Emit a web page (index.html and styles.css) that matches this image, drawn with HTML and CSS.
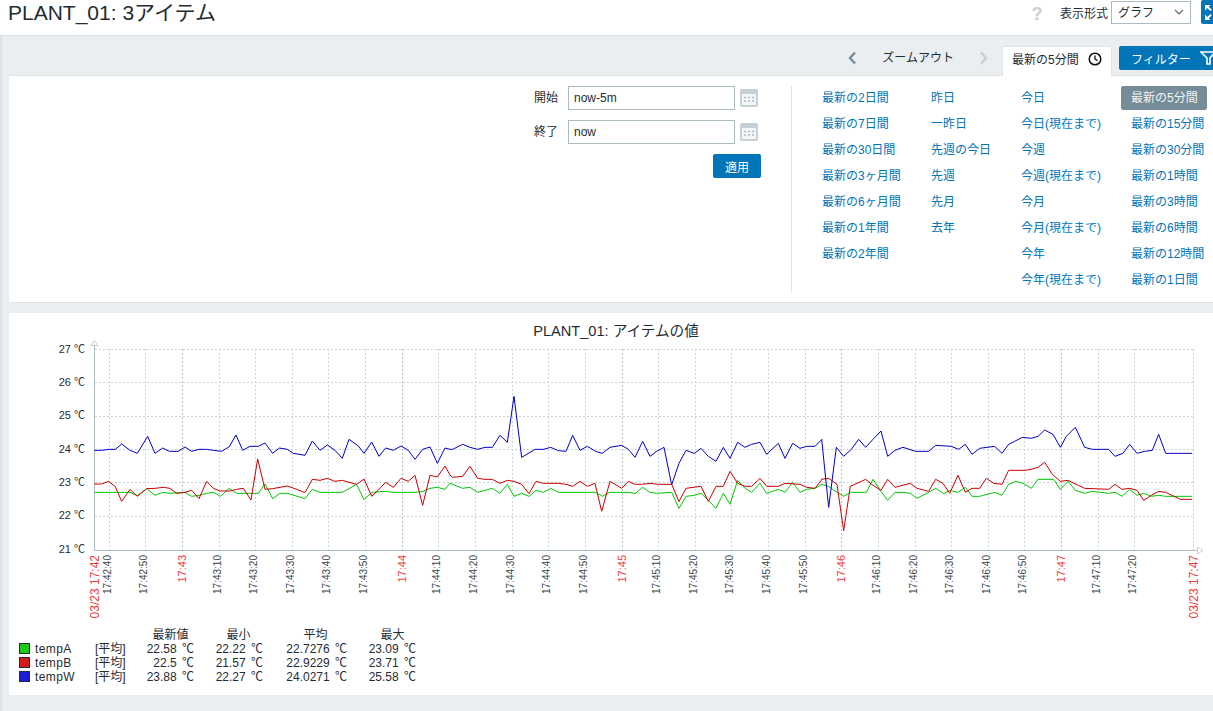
FILE: index.html
```html
<!DOCTYPE html>
<html lang="ja">
<head>
<meta charset="utf-8">
<title>PLANT_01</title>
<link rel="stylesheet" href="styles.css">
</head>
<body>
<header class="head">
  <h1 class="title">PLANT_01: 3アイテム</h1>
  <div class="head-tools">
    <span class="help">?</span>
    <label class="view-label">表示形式</label>
    <div class="select">グラフ
      <svg class="chev" width="10" height="6" viewBox="0 0 10 6"><path d="M1 1l4 4 4-4" fill="none" stroke="#5a6a73" stroke-width="1.2"/></svg>
    </div>
    <button class="expand" type="button">
      <svg class="expand-icon" width="22" height="24" viewBox="0 0 22 24"><path d="M4 5h5.500L7.800 6.700l3 3-1.400 1.400-3-3L4 10.500zM4 20h5.500l-1.700-1.700 3-3-1.400-1.400-3 3L4 14.500z" fill="#fff"/></svg>
    </button>
  </div>
</header>

<nav class="tabs">
  <svg class="arrow" width="10" height="14" viewBox="0 0 10 14"><path d="M8 1.5L3 7l5 5.5" fill="none" stroke="#768d99" stroke-width="2.4"/></svg>
  <span class="zoomout">ズームアウト</span>
  <svg class="arrow" width="10" height="14" viewBox="0 0 10 14"><path d="M2 1.5L7 7l-5 5.5" fill="none" stroke="#c5d0d6" stroke-width="2.4"/></svg>
  <div class="tab">最新の5分間
    <svg class="clock" width="14" height="14" viewBox="0 0 14 14"><circle cx="7" cy="7" r="5.800" fill="none" stroke="#111" stroke-width="1.500"/><path d="M7 3.400V7l2.400 1.600" fill="none" stroke="#111" stroke-width="1.300"/></svg>
  </div>
  <button class="filter-btn" type="button">フィルター
    <svg class="funnel" width="16" height="14" viewBox="0 0 16 14"><path d="M1 1h14L10 7v6H7V7z" fill="none" stroke="#fff" stroke-width="1.600"/></svg>
  </button>
</nav>

<section class="panel filter">
  <form class="range">
    <label class="range-label">開始</label>
    <div class="field">now-5m</div>
    <svg class="cal" width="18" height="18" viewBox="0 0 18 18"><rect width="18" height="18" rx="2" fill="#c6d1d7"/><rect x="2" y="5" width="14" height="11" fill="#f4f6f7"/><path d="M4 8.500h2M8 8.500h2M12 8.500h2M4 12h2M8 12h2M12 12h2" stroke="#aebcc4" stroke-width="1.500"/></svg>
    <label class="range-label">終了</label>
    <div class="field">now</div>
    <svg class="cal" width="18" height="18" viewBox="0 0 18 18"><rect width="18" height="18" rx="2" fill="#c6d1d7"/><rect x="2" y="5" width="14" height="11" fill="#f4f6f7"/><path d="M4 8.500h2M8 8.500h2M12 8.500h2M4 12h2M8 12h2M12 12h2" stroke="#aebcc4" stroke-width="1.500"/></svg>
    <button class="apply" type="button">適用</button>
  </form>
  <div class="quick">
    <a class="q">最新の2日間</a><a class="q">昨日</a><a class="q">今日</a><a class="q q-on">最新の5分間</a>
    <a class="q">最新の7日間</a><a class="q">一昨日</a><a class="q">今日(現在まで)</a><a class="q">最新の15分間</a>
    <a class="q">最新の30日間</a><a class="q">先週の今日</a><a class="q">今週</a><a class="q">最新の30分間</a>
    <a class="q">最新の3ヶ月間</a><a class="q">先週</a><a class="q">今週(現在まで)</a><a class="q">最新の1時間</a>
    <a class="q">最新の6ヶ月間</a><a class="q">先月</a><a class="q">今月</a><a class="q">最新の3時間</a>
    <a class="q">最新の1年間</a><a class="q">去年</a><a class="q">今月(現在まで)</a><a class="q">最新の6時間</a>
    <a class="q">最新の2年間</a><span></span><a class="q">今年</a><a class="q">最新の12時間</a>
    <span></span><span></span><a class="q">今年(現在まで)</a><a class="q">最新の1日間</a>
  </div>
</section>

<section class="panel graph">
<svg class="chart" width="1204" height="382" viewBox="9 313 1204 382">
  <text class="c-title" x="616" y="336" text-anchor="middle">PLANT_01: アイテムの値</text>

  <path class="grid" d="M95 349.500H1193M95 382.500H1193M95 416.500H1193M95 449.500H1193M95 482.500H1193M95 516.500H1193"/>
  <path class="grid" d="M109.500 349V550M145.500 349V550M219.500 349V550M255.500 349V550M292.500 349V550M328.500 349V550M365.500 349V550M438.500 349V550M475.500 349V550M512.500 349V550M548.500 349V550M585.500 349V550M658.500 349V550M695.500 349V550M731.500 349V550M768.500 349V550M805.500 349V550M878.500 349V550M915.500 349V550M951.500 349V550M988.500 349V550M1024.500 349V550M1098.500 349V550M1134.500 349V550M1193.500 349V550"/>
  <path class="grid-major" d="M182.500 349V550M402.500 349V550M622.500 349V550M841.500 349V550M1061.500 349V550"/>
  <path class="axis" d="M94.500 346V550.500H1197"/>
  <path class="axis-tip" d="M94.500 340.500L98 345.500H91zM1203 550.500L1197.500 547V554z"/>

  <g class="y-labels" text-anchor="end">
    <text x="85" y="353">27 ℃</text><text x="85" y="386">26 ℃</text><text x="85" y="419">25 ℃</text><text x="85" y="453">24 ℃</text><text x="85" y="486">23 ℃</text><text x="85" y="519">22 ℃</text><text x="85" y="553">21 ℃</text>
  </g>

  <g transform="translate(50 320) scale(.33333)">
    <polyline class="s-g" points="133,517 240,517 262,527 290,506 315,526 338,517 360,520 405,517 425,529 447,526 470,520 490,517 512,529 537,505 560,520 625,520 645,492 668,536 690,520 712,520 765,536 787,508 810,517 877,517 920,493 942,539 965,517 1007,514 1030,517 1095,517 1118,514 1140,505 1162,502 1185,508 1200,490"/>
    <polyline class="s-r" points="133,492 155,492 175,484 196,500 215,544 240,508 262,529 290,506 315,505 340,502 360,505 380,520 405,517 425,511 447,536 470,484 490,505 510,513 540,513 560,508 580,505 603,540 623,417 645,508 668,506 690,502 712,498 735,506 765,518 787,478 810,481 832,475 855,484 877,481 897,487 920,493 942,477 965,529 985,510 1007,487 1030,502 1053,475 1075,484 1095,466 1118,556 1140,466 1162,471 1185,438 1200,465"/>
    <polyline class="s-b" points="133,391 155,391 178,388 196,388 215,372 240,391 262,400 293,349 315,400 338,384 358,394 385,394 405,381 425,394 447,388 470,388 490,391 515,394 538,380 558,345 578,391 600,379 625,379 645,369 668,400 688,384 712,388 730,400 765,406 787,363 810,391 832,375 855,391 877,415 897,358 925,378 942,400 965,366 987,409 1007,384 1030,391 1053,378 1075,391 1095,418 1118,388 1140,381 1162,430 1185,384 1200,388"/>
  </g>
  <g transform="translate(450 380) scale(.33333)">
    <polyline class="s-g" points="0,310 38,325 60,322 83,337 127,325 150,340 172,313 192,349 215,340 237,349 258,331 280,337 302,325 325,337 437,337 457,349 480,337 540,337 555,341 578,322 600,337 620,340 665,337 687,385 708,349 733,346 753,340 775,361 798,385 820,340 840,373 863,301 885,325 905,337 930,310 950,340 985,328 1005,337 1028,307 1050,337 1070,328 1095,325 1116,313"/>
    <polyline class="s-r" points="0,285 8,292 38,289 60,259 83,295 105,298 127,298 150,310 172,301 192,304 215,313 237,341 258,304 280,310 325,310 348,313 368,319 390,304 412,319 435,310 455,394 480,304 515,325 535,304 555,313 575,313 600,310 625,313 665,313 687,365 708,325 753,319 775,364 798,319 820,319 840,274 863,310 885,319 905,319 930,295 950,319 985,319 1005,310 1050,313 1070,322 1095,325 1116,298"/>
    <polyline class="s-b" points="0,208 8,208 38,193 60,202 83,208 105,202 127,202 150,166 172,187 192,49 215,232 255,208 280,208 302,202 325,212 348,214 368,166 390,211 412,199 437,214 457,220 480,202 515,196 535,208 555,232 578,184 600,229 620,214 642,202 665,315 687,250 708,211 733,220 753,205 775,229 798,244 820,202 840,235 863,187 885,202 905,193 930,187 950,223 985,190 1005,235 1028,190 1050,205 1070,199 1095,199 1116,178"/>
  </g>
  <g transform="translate(813 380) scale(.33333)">
    <polyline class="s-g" points="25,313 47,319 72,337 92,349 112,337 160,337 180,298 204,334 224,361 246,337 270,337 292,340 312,355 347,337 368,325 392,341 410,331 435,337 457,322 477,349 500,349 545,337 567,346 587,313 608,304 630,310 655,325 675,298 722,298 742,328 765,304 787,331 815,340 838,334 887,340 906,337 927,349 950,328 972,346 992,340 1015,349 1037,346 1058,349 1137,349"/>
    <polyline class="s-r" points="25,298 47,295 72,313 92,452 112,319 158,298 180,316 204,331 224,298 246,322 292,310 312,325 347,334 368,298 390,310 410,340 435,286 457,337 477,325 500,325 520,295 542,310 567,313 587,271 635,271 655,268 675,262 695,247 718,283 742,304 765,301 815,325 887,328 906,313 927,328 950,325 972,331 992,361 1015,346 1037,334 1058,337 1102,358 1137,358"/>
    <polyline class="s-b" points="26,178 47,382 70,202 92,229 115,208 137,178 158,202 180,178 204,153 224,229 246,211 270,202 308,214 347,214 368,196 415,199 437,208 457,193 477,223 500,205 545,199 567,220 587,193 605,184 628,172 655,175 675,169 695,150 720,163 742,202 760,169 787,142 815,202 838,208 887,208 906,229 930,220 950,193 972,220 995,214 1018,211 1037,163 1058,220 1137,220"/>
  </g>

  <g class="t-labels" text-anchor="end">
    <text transform="translate(110.500 555) rotate(-90)">17:42:40</text>
    <text transform="translate(146.500 555) rotate(-90)">17:42:50</text>
    <text transform="translate(220.500 555) rotate(-90)">17:43:10</text>
    <text transform="translate(256.500 555) rotate(-90)">17:43:20</text>
    <text transform="translate(293.500 555) rotate(-90)">17:43:30</text>
    <text transform="translate(329.500 555) rotate(-90)">17:43:40</text>
    <text transform="translate(366.500 555) rotate(-90)">17:43:50</text>
    <text transform="translate(439.500 555) rotate(-90)">17:44:10</text>
    <text transform="translate(476.500 555) rotate(-90)">17:44:20</text>
    <text transform="translate(513.500 555) rotate(-90)">17:44:30</text>
    <text transform="translate(549.500 555) rotate(-90)">17:44:40</text>
    <text transform="translate(586.500 555) rotate(-90)">17:44:50</text>
    <text transform="translate(659.500 555) rotate(-90)">17:45:10</text>
    <text transform="translate(696.500 555) rotate(-90)">17:45:20</text>
    <text transform="translate(732.500 555) rotate(-90)">17:45:30</text>
    <text transform="translate(769.500 555) rotate(-90)">17:45:40</text>
    <text transform="translate(806.500 555) rotate(-90)">17:45:50</text>
    <text transform="translate(879.500 555) rotate(-90)">17:46:10</text>
    <text transform="translate(916.500 555) rotate(-90)">17:46:20</text>
    <text transform="translate(952.500 555) rotate(-90)">17:46:30</text>
    <text transform="translate(989.500 555) rotate(-90)">17:46:40</text>
    <text transform="translate(1025.500 555) rotate(-90)">17:46:50</text>
    <text transform="translate(1099.500 555) rotate(-90)">17:47:10</text>
    <text transform="translate(1135.500 555) rotate(-90)">17:47:20</text>
  </g>
  <g class="t-red" text-anchor="end">
    <text class="t-date" transform="translate(99 555) rotate(-90)">03/23 17:42</text>
    <text transform="translate(186 555) rotate(-90)">17:43</text>
    <text transform="translate(406 555) rotate(-90)">17:44</text>
    <text transform="translate(626 555) rotate(-90)">17:45</text>
    <text transform="translate(845 555) rotate(-90)">17:46</text>
    <text transform="translate(1065 555) rotate(-90)">17:47</text>
    <text class="t-date" transform="translate(1198 555) rotate(-90)">03/23 17:47</text>
  </g>

  <g class="legend">
    <text x="170.500" y="639" text-anchor="middle">最新値</text>
    <text x="238.500" y="639" text-anchor="middle">最小</text>
    <text x="315.500" y="639" text-anchor="middle">平均</text>
    <text x="392.500" y="639" text-anchor="middle">最大</text>

    <rect class="sw-a" x="19.500" y="643.500" width="10" height="10"/>
    <text class="name" x="35" y="653">tempA</text>
    <text x="95" y="653">[平均]</text>
    <text x="194" y="653" text-anchor="end">22.58 ℃</text><text x="263" y="653" text-anchor="end">22.22 ℃</text><text x="347" y="653" text-anchor="end">22.7276 ℃</text><text x="416" y="653" text-anchor="end">23.09 ℃</text>

    <rect class="sw-b" x="19.500" y="657.500" width="10" height="10"/>
    <text class="name" x="35" y="667">tempB</text>
    <text x="95" y="667">[平均]</text>
    <text x="194" y="667" text-anchor="end">22.5 ℃</text><text x="263" y="667" text-anchor="end">21.57 ℃</text><text x="347" y="667" text-anchor="end">22.9229 ℃</text><text x="416" y="667" text-anchor="end">23.71 ℃</text>

    <rect class="sw-w" x="19.500" y="671.500" width="10" height="10"/>
    <text class="name" x="35" y="681">tempW</text>
    <text x="95" y="681">[平均]</text>
    <text x="194" y="681" text-anchor="end">23.88 ℃</text><text x="263" y="681" text-anchor="end">22.27 ℃</text><text x="347" y="681" text-anchor="end">24.0271 ℃</text><text x="416" y="681" text-anchor="end">25.58 ℃</text>
  </g>
</svg>
</section>
</body>
</html>
```
FILE: styles.css
```css
* { box-sizing: border-box; }
html, body { height: 100%; }
body {
  margin: 0;
  overflow: hidden;
  background: linear-gradient(90deg, #d9dee1 0, #ebeef0 4px);
  color: #1f2c33;
  font: 12px "Liberation Sans", "Noto Sans CJK JP", sans-serif;
}
.head {
  height: 36px;
  display: flex;
  justify-content: space-between;
  background: #fff;
  border-bottom: 1px solid #dfe4e7;
  padding-left: 8px;
}
.title {
  margin: 0;
  font-size: 21px;
  font-weight: 400;
  line-height: 26px;
  white-space: nowrap;
}
.head-tools {
  display: flex;
  align-items: flex-start;
  margin-right: -10px;
}
.help {
  width: 16px;
  margin-right: 15px;
  margin-top: 2px;
  font-size: 18px;
  line-height: 24px;
  font-weight: 700;
  color: #c5d0d6;
  text-align: center;
}
.view-label { line-height: 28px; margin-right: 3px; }
.select {
  position: relative;
  width: 80px;
  height: 23px;
  margin-top: 1px;
  padding: 1px 0 0 6px;
  line-height: 21px;
  border: 1px solid #acbbc2;
  background: #fff;
}
.chev { position: absolute; right: 6px; top: 7px; }
.expand {
  width: 22px;
  height: 24px;
  margin-left: 10px;
  padding: 0;
  border: 0;
  border-radius: 2px;
  background: #0275b8;
  display: block;
  line-height: 0;
}
.expand-icon { display: block; }
.tabs {
  height: 39px;
  display: flex;
  justify-content: flex-end;
  align-items: flex-start;
  margin-right: -10px;
  padding-top: 10px;
}
.arrow { margin-top: 5px; flex: none; }
.zoomout { margin: 5px 25px 0 25px; line-height: 14px; white-space: nowrap; }
.tab {
  display: flex;
  align-items: center;
  justify-content: space-between;
  width: 110px;
  height: 30px;
  margin-left: 13px;
  padding: 0 9px 6px;
  background: #fff;
  border: 1px solid #dfe4e7;
  border-bottom: 0;
  position: relative;
  z-index: 1;
  white-space: nowrap;
}
.clock { flex: none; }
.filter-btn {
  display: flex;
  align-items: center;
  width: 104px;
  height: 24px;
  margin-left: 7px;
  padding: 0 0 0 12px;
  border: 0;
  border-radius: 2px;
  background: #0275b8;
  color: #fff;
  font: inherit;
  white-space: nowrap;
}
.funnel { margin-left: 9px; flex: none; }
.panel {
  margin-left: 9px;
  background: #fff;
}
.filter {
  height: 228px;
  border-top: 1px solid #dfe4e7;
  border-bottom: 1px solid #dfe4e7;
  padding-top: 10px;
  display: flex;
  justify-content: flex-end;
}
.range {
  display: grid;
  grid-template-columns: auto 167px 26px;
  grid-auto-rows: 24px;
  row-gap: 10px;
  align-content: start;
  margin-right: 30px;
}
.range-label { padding-right: 10px; line-height: 25px; text-align: right; }
.field {
  border: 1px solid #acbbc2;
  padding-left: 5px;
  line-height: 22px;
  font-size: 12px;
}
.cal { margin: 3px 0 0 5px; }
.apply {
  grid-column: 1 / -1;
  justify-self: end;
  width: 48px;
  height: 24px;
  padding: 0;
  border: 0;
  border-radius: 2px;
  background: #0275b8;
  color: #fff;
  font: inherit;
}
.quick {
  width: 422px;
  height: 206px;
  border-left: 1px solid #dfe4e7;
  padding-left: 30px;
  display: grid;
  grid-template-columns: 109px 90px 110px 1fr;
  grid-auto-rows: 26px;
  white-space: nowrap;
}
.q { color: #0275b8; line-height: 24px; }
.q-on {
  justify-self: start;
  width: 86px;
  height: 24px;
  margin-left: -10px;
  padding-left: 10px;
  border-radius: 2px;
  background: #768d99;
  color: #f2f4f5;
}
.graph {
  height: 382px;
  margin-top: 10px;
}
.chart {
  display: block;
  font-family: "Liberation Sans", "Noto Sans CJK JP", sans-serif;
}
.c-title { font-size: 14.600px; fill: #1f2c33; }
.grid { fill: none; stroke: #cbd5db; stroke-dasharray: 2 2; }
.grid-major { fill: none; stroke: #b3c1c9; stroke-dasharray: 2 2; }
.axis { fill: none; stroke: #acbbc2; }
.axis-tip { fill: #fff; stroke: #c5d0d6; }
.y-labels { font-size: 11px; fill: #1f2c33; }
.t-labels { font-size: 10px; fill: #3a464d; }
.t-red { font-size: 11px; fill: #f04040; }
.t-date { font-size: 12px; }
.s-g, .s-r, .s-b { fill: none; stroke-width: 1; vector-effect: non-scaling-stroke; stroke-linejoin: round; }
.s-g { stroke: #00c800; }
.s-r { stroke: #c80000; }
.s-b { stroke: #0000c8; }
.legend { font-size: 12px; fill: #1f2c33; word-spacing: 2px; }
.name { letter-spacing: .4px; }
.sw-a, .sw-b, .sw-w { stroke: #1f2c33; stroke-width: 1; }
.sw-a { fill: #1acc1a; }
.sw-b { fill: #d21c1c; }
.sw-w { fill: #1c1cd2; }
```
